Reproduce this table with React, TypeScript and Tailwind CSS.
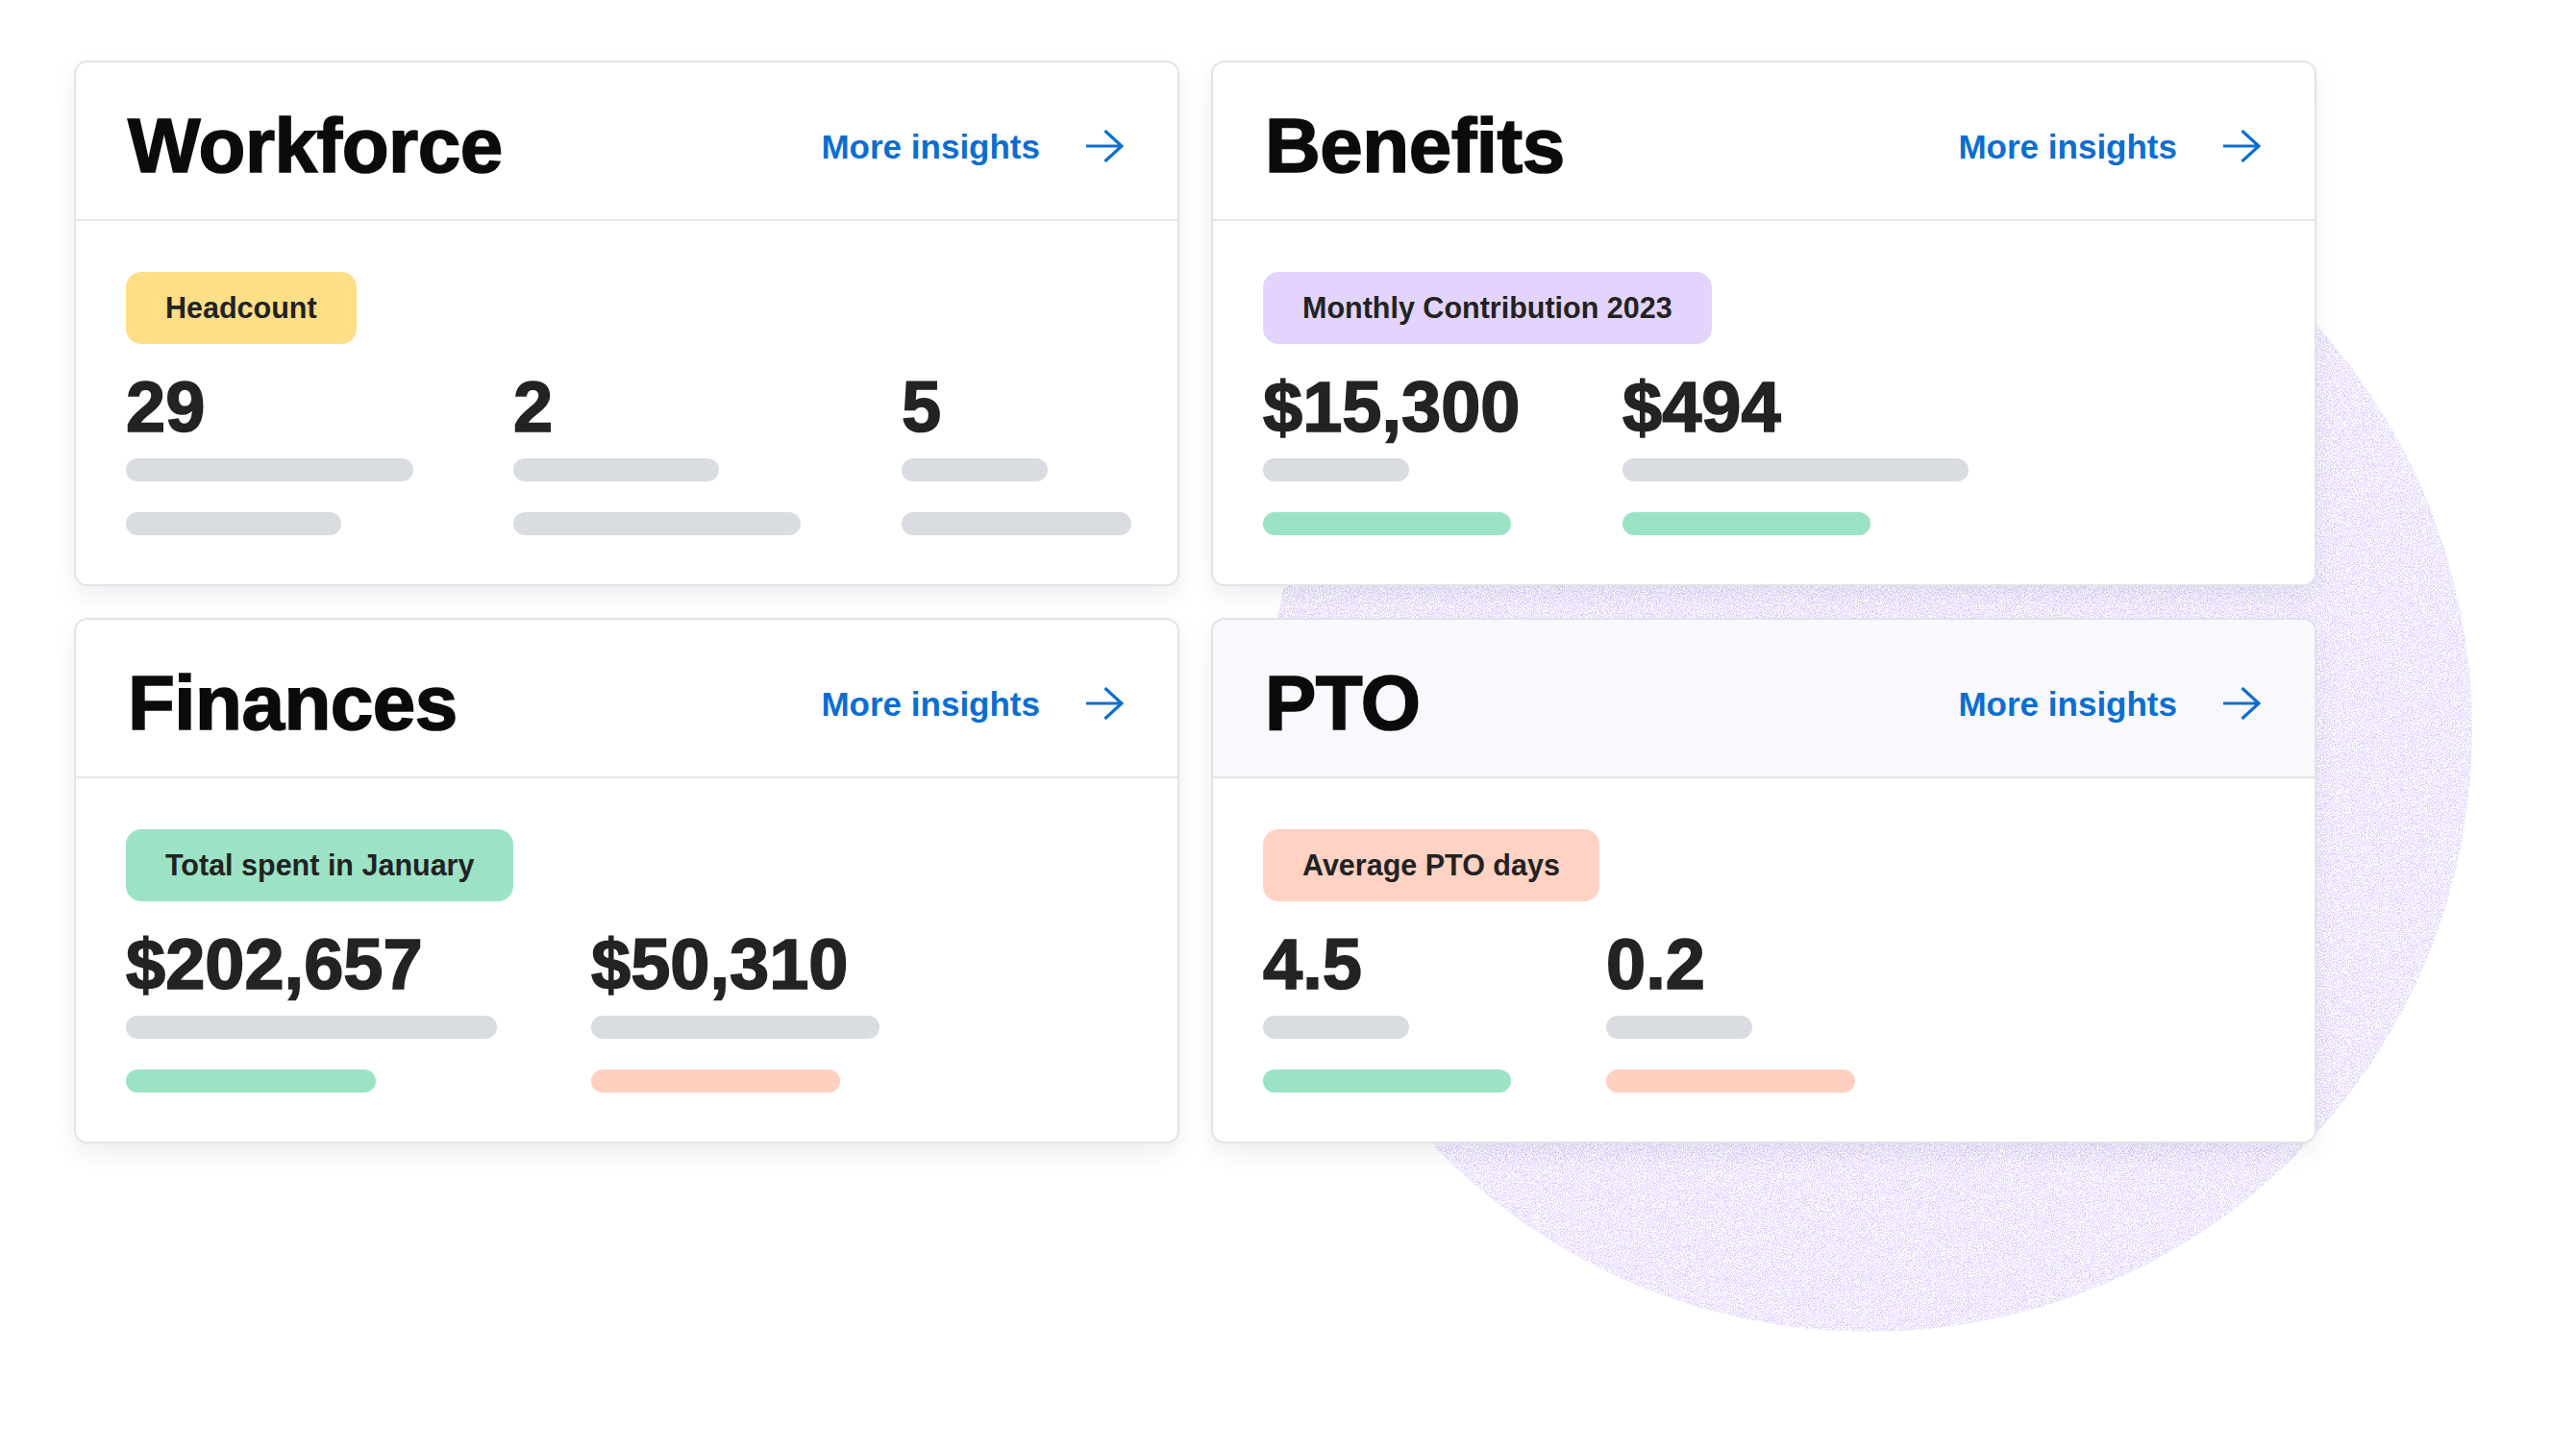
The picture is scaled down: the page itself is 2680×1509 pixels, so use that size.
import React from 'react'

type Bar = { w: number; color: string }
type Column = { value: string; width?: number; bars: [Bar, Bar] }
type Card = {
  title: string
  label: string
  labelBg: string
  headerBg?: string
  columns: Column[]
}

const GRAY = 'bg-[#d9dce1]'
const GREEN = 'bg-[#9ce3c6]'
const PEACH = 'bg-[#ffd0c0]'

const cards: Card[] = [
  {
    title: 'Workforce',
    label: 'Headcount',
    labelBg: 'bg-[#fede86]',
    columns: [
      { value: '29', width: 403, bars: [{ w: 299, color: GRAY }, { w: 224, color: GRAY }] },
      { value: '2', width: 404, bars: [{ w: 214, color: GRAY }, { w: 299, color: GRAY }] },
      { value: '5', bars: [{ w: 152, color: GRAY }, { w: 239, color: GRAY }] },
    ],
  },
  {
    title: 'Benefits',
    label: 'Monthly Contribution 2023',
    labelBg: 'bg-[#e2d4fc]',
    columns: [
      { value: '$15,300', width: 374, bars: [{ w: 152, color: GRAY }, { w: 258, color: GREEN }] },
      { value: '$494', bars: [{ w: 360, color: GRAY }, { w: 258, color: GREEN }] },
    ],
  },
  {
    title: 'Finances',
    label: 'Total spent in January',
    labelBg: 'bg-[#9ce3c6]',
    columns: [
      { value: '$202,657', width: 484, bars: [{ w: 386, color: GRAY }, { w: 260, color: GREEN }] },
      { value: '$50,310', bars: [{ w: 300, color: GRAY }, { w: 259, color: PEACH }] },
    ],
  },
  {
    title: 'PTO',
    label: 'Average PTO days',
    labelBg: 'bg-[#ffd2c3]',
    headerBg: 'bg-[#f9f8fd]',
    columns: [
      { value: '4.5', width: 357, bars: [{ w: 152, color: GRAY }, { w: 258, color: GREEN }] },
      { value: '0.2', bars: [{ w: 152, color: GRAY }, { w: 259, color: PEACH }] },
    ],
  },
]

function ArrowRight() {
  return (
    <svg width="39" height="34" viewBox="0 0 39 34" fill="none" className="shrink-0">
      <path d="M0 17 H37 M19.5 1 L37 17 L19.5 33" stroke="#0a6ed1" strokeWidth="3.2" strokeLinejoin="miter" />
    </svg>
  )
}

function GrainCircle() {
  // grainy lavender disc sitting behind the right column
  return (
    <svg
      width="1254"
      height="1254"
      viewBox="0 0 1254 1254"
      className="absolute left-[1318px] top-[132px] pointer-events-none"
    >
      <defs>
        <filter id="grain" x="0" y="0" width="1254" height="1254" filterUnits="userSpaceOnUse">
          <feTurbulence type="fractalNoise" baseFrequency="0.9" numOctaves="2" seed="9" stitchTiles="stitch" />
          <feColorMatrix type="matrix" values="0 0 0 0 0.75  0 0 0 0 0.66  0 0 0 0 0.97  8 0 0 0 -3.55" />
        </filter>
        <clipPath id="disc">
          <circle cx="627" cy="627" r="627" />
        </clipPath>
      </defs>
      <g clipPath="url(#disc)">
        <rect width="1254" height="1254" filter="url(#grain)" />
      </g>
    </svg>
  )
}

function InsightCard({ card }: { card: Card }) {
  return (
    <div className="relative z-10 bg-white border-2 border-[#e1e3e8] rounded-[14px] shadow-[0_10px_24px_rgba(20,20,40,0.07)] overflow-hidden">
      {/* Header */}
      <div
        className={`flex items-center justify-between pl-[54px] pr-[56px] pt-[47px] pb-[36px] border-b-2 border-[#e3e5e9] ${
          card.headerBg ?? 'bg-white'
        }`}
      >
        <h2 className="text-[80px] leading-none font-bold tracking-[-0.5px] text-[#0b0b0b] [-webkit-text-stroke:1.6px_#0b0b0b]">
          {card.title}
        </h2>
        <a className="flex items-center gap-[48px] text-[35px] leading-none font-bold text-[#0a6ed1]">
          <span>More insights</span>
          <ArrowRight />
        </a>
      </div>

      {/* Body */}
      <div className="pl-[52px] pr-[52px] pt-[53px] pb-[51px] bg-white">
        <div
          className={`inline-flex items-center h-[75px] px-[41px] rounded-[16px] text-[30.5px] leading-none font-bold text-[#222222] ${card.labelBg}`}
        >
          {card.label}
        </div>
        <div className="flex mt-[29px]">
          {card.columns.map((col, i) => (
            <div key={i} className="flex flex-col shrink-0" style={col.width ? { width: col.width } : undefined}>
              <span className="text-[74px] leading-none font-bold text-[#232323] [-webkit-text-stroke:1.6px_#232323]">
                {col.value}
              </span>
              <div className={`mt-[16px] h-[24px] rounded-full ${col.bars[0].color}`} style={{ width: col.bars[0].w }} />
              <div className={`mt-[32px] h-[24px] rounded-full ${col.bars[1].color}`} style={{ width: col.bars[1].w }} />
            </div>
          ))}
        </div>
      </div>
    </div>
  )
}

export default function App() {
  return (
    <div className="relative w-[2680px] h-[1509px] bg-white overflow-hidden font-['Liberation_Sans',Arial,sans-serif]">
      <GrainCircle />
      <div className="relative pt-[63px] pl-[77px] grid grid-cols-[1150px_1150px] gap-[33px]">
        {cards.map((c) => (
          <InsightCard key={c.title} card={c} />
        ))}
      </div>
    </div>
  )
}
